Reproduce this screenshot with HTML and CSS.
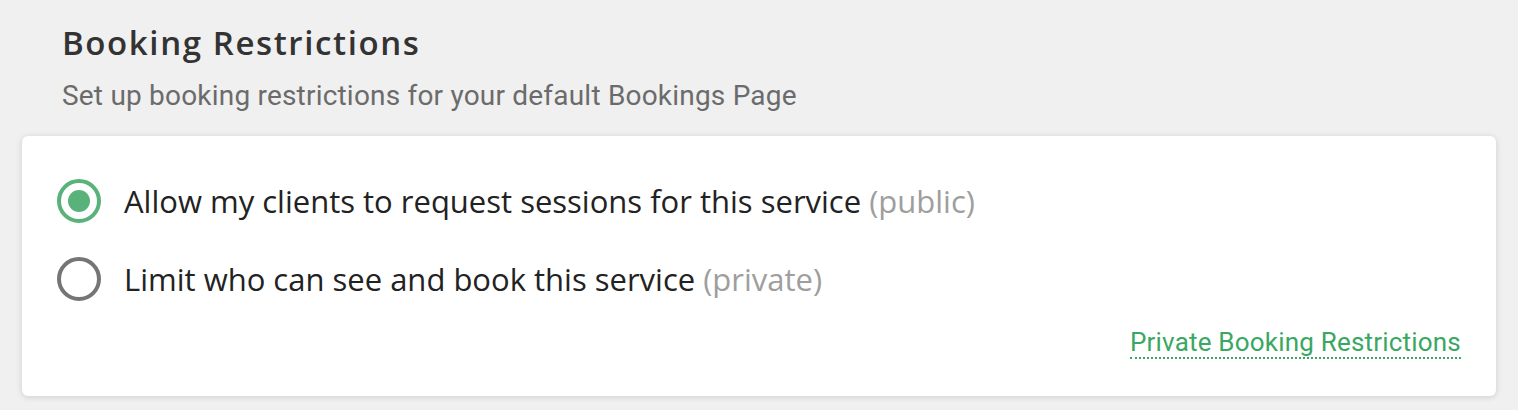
FILE: index.html
```html
<!DOCTYPE html>
<html lang="en">
<head>
<meta charset="UTF-8">
<title>Booking Restrictions</title>
<link rel="stylesheet" href="styles.css">
</head>
<body>
<section class="settings">
    <header class="settings-head">
        <h2 class="settings-title">Booking Restrictions</h2>
        <p class="settings-sub">Set up booking restrictions for your default Bookings Page</p>
    </header>
    <div class="card">
        <label class="option">
            <input type="radio" name="visibility" value="public" checked>
            <span class="radio"></span>
            <span class="option-text">Allow my clients to request sessions for this service <span class="muted">(public)</span></span>
        </label>
        <label class="option">
            <input type="radio" name="visibility" value="private">
            <span class="radio"></span>
            <span class="option-text">Limit who can see and book this service <span class="muted">(private)</span></span>
        </label>
        <div class="card-foot">
            <a href="#" class="dotted-link">Private Booking Restrictions</a>
        </div>
    </div>
</section>
</body>
</html>
```

FILE: styles.css
```css
body {
    margin: 0;
    background-color: #f0f0f0;
    font-family: Roboto, "Liberation Sans", sans-serif;
}
.settings {
    padding: 23px 22px 15px 22px;
}
.settings-head {
    padding: 0 40px;
    margin-bottom: 22px;
}
.settings-title {
    margin: 0;
    font-family: "Open Sans", sans-serif;
    font-weight: 600;
    font-size: 33px;
    line-height: 40px;
    letter-spacing: 1.6px;
    color: #333;
}
.settings-sub {
    margin: 15px 0 0 0;
    font-size: 28px;
    line-height: 36px;
    letter-spacing: 0.2px;
    color: #6b6b6b;
}
.card {
    background-color: #fff;
    border-radius: 6px;
    box-shadow: 0 1px 6px rgba(0, 0, 0, 0.15);
    padding: 43px 35px 37px 35px;
}
.option {
    display: flex;
    align-items: center;
    gap: 23px;
    height: 44px;
    margin-bottom: 34px;
    cursor: pointer;
}
.option input {
    display: none;
}
.radio {
    width: 44px;
    height: 44px;
    box-sizing: border-box;
    border: 4px solid #757575;
    border-radius: 50%;
    display: flex;
    align-items: center;
    justify-content: center;
    flex-shrink: 0;
}
.option input:checked + .radio {
    border-color: #5ab27b;
}
.option input:checked + .radio::after {
    content: "";
    width: 22px;
    height: 22px;
    border-radius: 50%;
    background-color: #5ab27b;
}
.option-text {
    font-family: "Open Sans", sans-serif;
    font-weight: 500;
    font-size: 31px;
    color: #222;
}
.muted {
    color: #9e9e9e;
}
.card-foot {
    display: flex;
    justify-content: flex-end;
    margin-top: -7px;
}
.dotted-link {
    font-size: 26px;
    line-height: 29px;
    letter-spacing: 0.2px;
    color: #3aa763;
    text-decoration: none;
    border-bottom: 2px dotted #3aa763;
}
```
